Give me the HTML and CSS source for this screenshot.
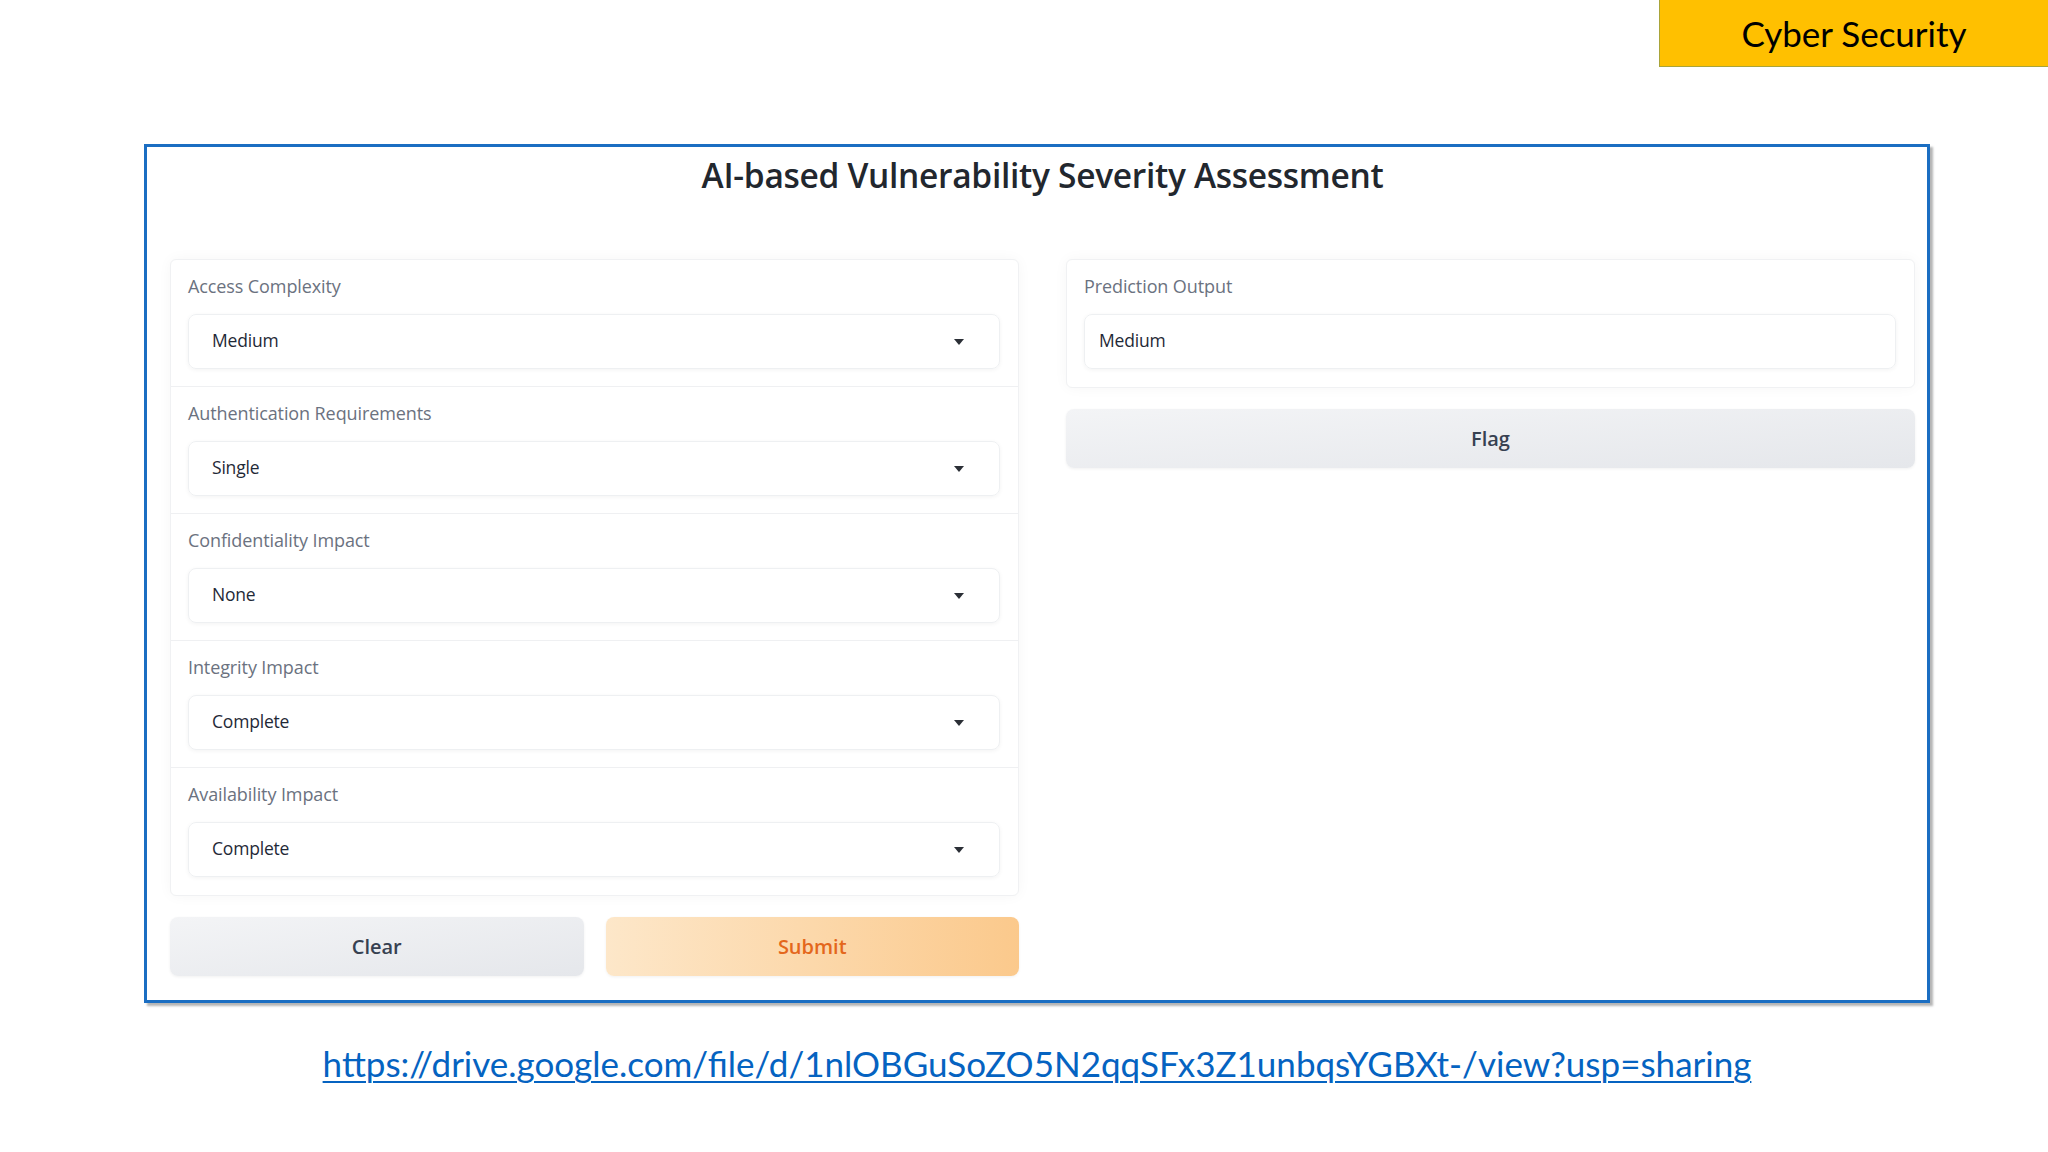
FILE: index.html
```html
<!DOCTYPE html>
<html>
<head>
  <meta charset="utf-8">
  <link rel="stylesheet" href="styles.css">
</head>
<body>
  <div class="top-bar">
    <div class="topic-badge">Cyber Security</div>
  </div>

  <div class="app-frame">
    <h1 class="app-title">AI-based Vulnerability Severity Assessment</h1>

    <div class="app-columns">
      <div class="column">
        <div class="form-panel">
          <div class="field-block">
            <div class="field-label">Access Complexity</div>
            <div class="dropdown">
              <span>Medium</span>
              <span class="caret"></span>
            </div>
          </div>
          <div class="field-block">
            <div class="field-label">Authentication Requirements</div>
            <div class="dropdown">
              <span>Single</span>
              <span class="caret"></span>
            </div>
          </div>
          <div class="field-block">
            <div class="field-label">Confidentiality Impact</div>
            <div class="dropdown">
              <span>None</span>
              <span class="caret"></span>
            </div>
          </div>
          <div class="field-block">
            <div class="field-label">Integrity Impact</div>
            <div class="dropdown">
              <span>Complete</span>
              <span class="caret"></span>
            </div>
          </div>
          <div class="field-block">
            <div class="field-label">Availability Impact</div>
            <div class="dropdown">
              <span>Complete</span>
              <span class="caret"></span>
            </div>
          </div>
        </div>
        <div class="button-row">
          <button class="btn btn-secondary">Clear</button>
          <button class="btn btn-primary">Submit</button>
        </div>
      </div>

      <div class="column">
        <div class="form-panel">
          <div class="field-block">
            <div class="field-label">Prediction Output</div>
            <div class="textbox">Medium</div>
          </div>
        </div>
        <button class="btn btn-secondary btn-flag">Flag</button>
      </div>
    </div>
  </div>

  <div class="link-row">
    <a class="share-link" href="#">https://drive.google.com/file/d/1nlOBGuSoZO5N2qqSFx3Z1unbqsYGBXt-/view?usp=sharing</a>
  </div>
</body>
</html>
```

FILE: styles.css
```css
body {
  margin: 0;
  width: 2048px;
  height: 1152px;
  background-color: #ffffff;
  font-family: 'Open Sans', 'Noto Sans', sans-serif;
  color: #1f2937;
  overflow: hidden;
}

.top-bar {
  display: flex;
  justify-content: flex-end;
  height: 68px;
}

.topic-badge {
  width: 388px;
  height: 66px;
  background-color: #ffc000;
  border: 1px solid #a9a43a;
  border-right: none;
  border-top: none;
  display: flex;
  align-items: center;
  justify-content: center;
  font-family: 'Lato', sans-serif;
  font-size: 35px;
  color: #000000;
}

.app-frame {
  margin: 76px 0 0 144px;
  width: 1745px;
  height: 853px;
  border: 3px solid #1b6ec2;
  box-shadow: 3px 3px 2px rgba(120, 120, 120, 0.55);
  padding: 0 12px 0 23px;
}

.app-title {
  margin: 0;
  padding-top: 5px;
  height: 107px;
  text-align: center;
  font-size: 33.5px;
  font-weight: 600;
  color: #22272e;
  letter-spacing: -0.3px;
}

.app-columns {
  display: flex;
  gap: 47px;
}

.column {
  width: 849px;
  display: flex;
  flex-direction: column;
}

.form-panel {
  background-color: #ffffff;
  border: 1px solid #f0f1f3;
  border-radius: 6px;
  box-shadow: 0 0 14px rgba(0, 0, 0, 0.04);
  overflow: hidden;
}

.field-block {
  height: 127px;
  box-sizing: border-box;
  padding: 14px 18px 0 17px;
  border-bottom: 1px solid #eff0f2;
}

.field-block:last-child {
  border-bottom: none;
}

.field-label {
  font-size: 18px;
  line-height: 25px;
  color: #6b7280;
  letter-spacing: -0.1px;
  margin-bottom: 15px;
}

.dropdown,
.textbox {
  height: 55px;
  box-sizing: border-box;
  border: 1px solid #eef0f2;
  border-radius: 8px;
  box-shadow: 0 1px 4px rgba(0, 0, 0, 0.05);
  display: flex;
  align-items: center;
  padding-bottom: 3px;
  font-size: 17.5px;
  font-weight: 500;
  color: #1f2937;
  letter-spacing: -0.2px;
}

.dropdown {
  justify-content: space-between;
  padding-left: 23px;
  padding-right: 35px;
}

.textbox {
  padding-left: 14px;
  padding-right: 14px;
}

.caret {
  width: 0;
  height: 0;
  margin-top: 3px;
  border-left: 5px solid transparent;
  border-right: 5px solid transparent;
  border-top: 6px solid #2b2f36;
}

.button-row {
  display: flex;
  gap: 22px;
  margin-top: 21px;
}

.btn {
  flex: 1;
  height: 59px;
  border: none;
  border-radius: 8px;
  font-family: 'Open Sans', 'Noto Sans', sans-serif;
  font-size: 20px;
  font-weight: 600;
  cursor: pointer;
}

.btn-secondary {
  background: linear-gradient(to bottom right, #f3f4f6, #e5e7eb);
  color: #374151;
  box-shadow: 0 1px 3px rgba(0, 0, 0, 0.06);
}

.btn-primary {
  background: linear-gradient(to right, #fde7c9, #fbc98c);
  color: #e4671c;
  box-shadow: 0 1px 3px rgba(0, 0, 0, 0.06);
}

.btn-flag {
  flex: none;
  margin-top: 21px;
  width: 100%;
}

.link-row {
  text-align: center;
  margin-top: 39px;
  padding-left: 26px;
}

.share-link {
  font-family: 'Lato', sans-serif;
  font-size: 35px;
  color: #0563c1;
  text-decoration: underline;
  text-underline-offset: 4px;
  text-decoration-thickness: 2px;
}
```
